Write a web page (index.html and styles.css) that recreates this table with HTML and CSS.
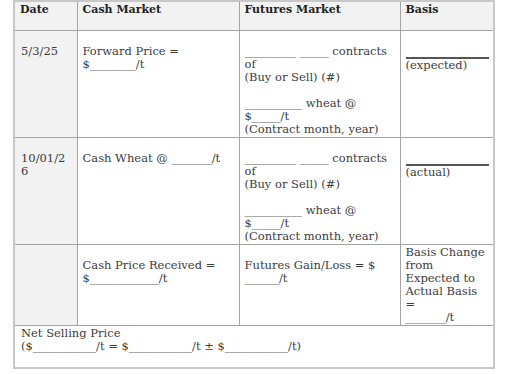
FILE: index.html
```html
<!DOCTYPE html>
<html lang="en">
<head>
<meta charset="utf-8">
<title>Hedging worksheet</title>
<link rel="stylesheet" href="styles.css">
</head>
<body>
<table class="sheet">
  <colgroup>
    <col class="c-date">
    <col class="c-cash">
    <col class="c-fut">
    <col class="c-basis">
  </colgroup>
  <thead>
    <tr class="head">
      <th>Date</th>
      <th>Cash Market</th>
      <th>Futures Market</th>
      <th>Basis</th>
    </tr>
  </thead>
  <tbody>
    <tr>
      <td class="date"><p class="gap">5/3/25</p></td>
      <td><p class="gap">Forward Price =<br>$________/t</p></td>
      <td>
        <p class="gap">_________ _____ contracts<br>of<br>(Buy or Sell) (#)</p>
        <p class="gap">__________ wheat @<br>$_____/t<br>(Contract month, year)</p>
      </td>
      <td><div class="rule"></div><p>(expected)</p></td>
    </tr>
    <tr>
      <td class="date"><p class="gap">10/01/2<br>6</p></td>
      <td><p class="gap">Cash Wheat @ _______/t</p></td>
      <td>
        <p class="gap">_________ _____ contracts<br>of<br>(Buy or Sell) (#)</p>
        <p class="gap">__________ wheat @<br>$_____/t<br>(Contract month, year)</p>
      </td>
      <td><div class="rule"></div><p>(actual)</p></td>
    </tr>
    <tr>
      <td class="date"></td>
      <td><p class="gap">Cash Price Received =<br>$____________/t</p></td>
      <td><p class="gap">Futures Gain/Loss = $<br>______/t</p></td>
      <td><p>Basis Change<br>from<br>Expected to<br>Actual Basis<br>=<br>_______/t</p></td>
    </tr>
    <tr>
      <td class="foot" colspan="4"><p>Net Selling Price<br>($___________/t = $___________/t ± $___________/t)</p></td>
    </tr>
  </tbody>
</table>
</body>
</html>
```

FILE: styles.css
```css
html, body {
  margin: 0;
  padding: 0;
  background: #ffffff;
}

body {
  font-family: "DejaVu Serif", "Liberation Serif", serif;
  font-size: 11.5px;
  line-height: 13px;
  color: #3c3c3c;
}

.sheet {
  margin: 0 0 0 13px;
  width: 480px;
  table-layout: fixed;
  border-collapse: collapse;
  border: 2px solid #c8c8c8;
}

.c-date { width: 63px; }
.c-cash { width: 162px; }
.c-fut { width: 161px; }
.c-basis { width: 94px; }

.sheet th,
.sheet td {
  border: 1px solid #a4a4a4;
  padding: 1px 5px 1px 5px;
  vertical-align: top;
  text-align: left;
}

.sheet th {
  background: #f2f2f2;
  font-size: 11px;
  font-weight: bold;
  color: #222222;
  padding-bottom: 14px;
}

.sheet td.date {
  background: #f2f2f2;
  padding-left: 6px;
}

.sheet td.foot {
  padding-bottom: 14px;
  padding-left: 6px;
}

p {
  margin: 0;
}

p.gap {
  margin-top: 13px;
}

.rule {
  margin-top: 25px;
  width: 83px;
  border-top: 2px solid #555555;
}
```
